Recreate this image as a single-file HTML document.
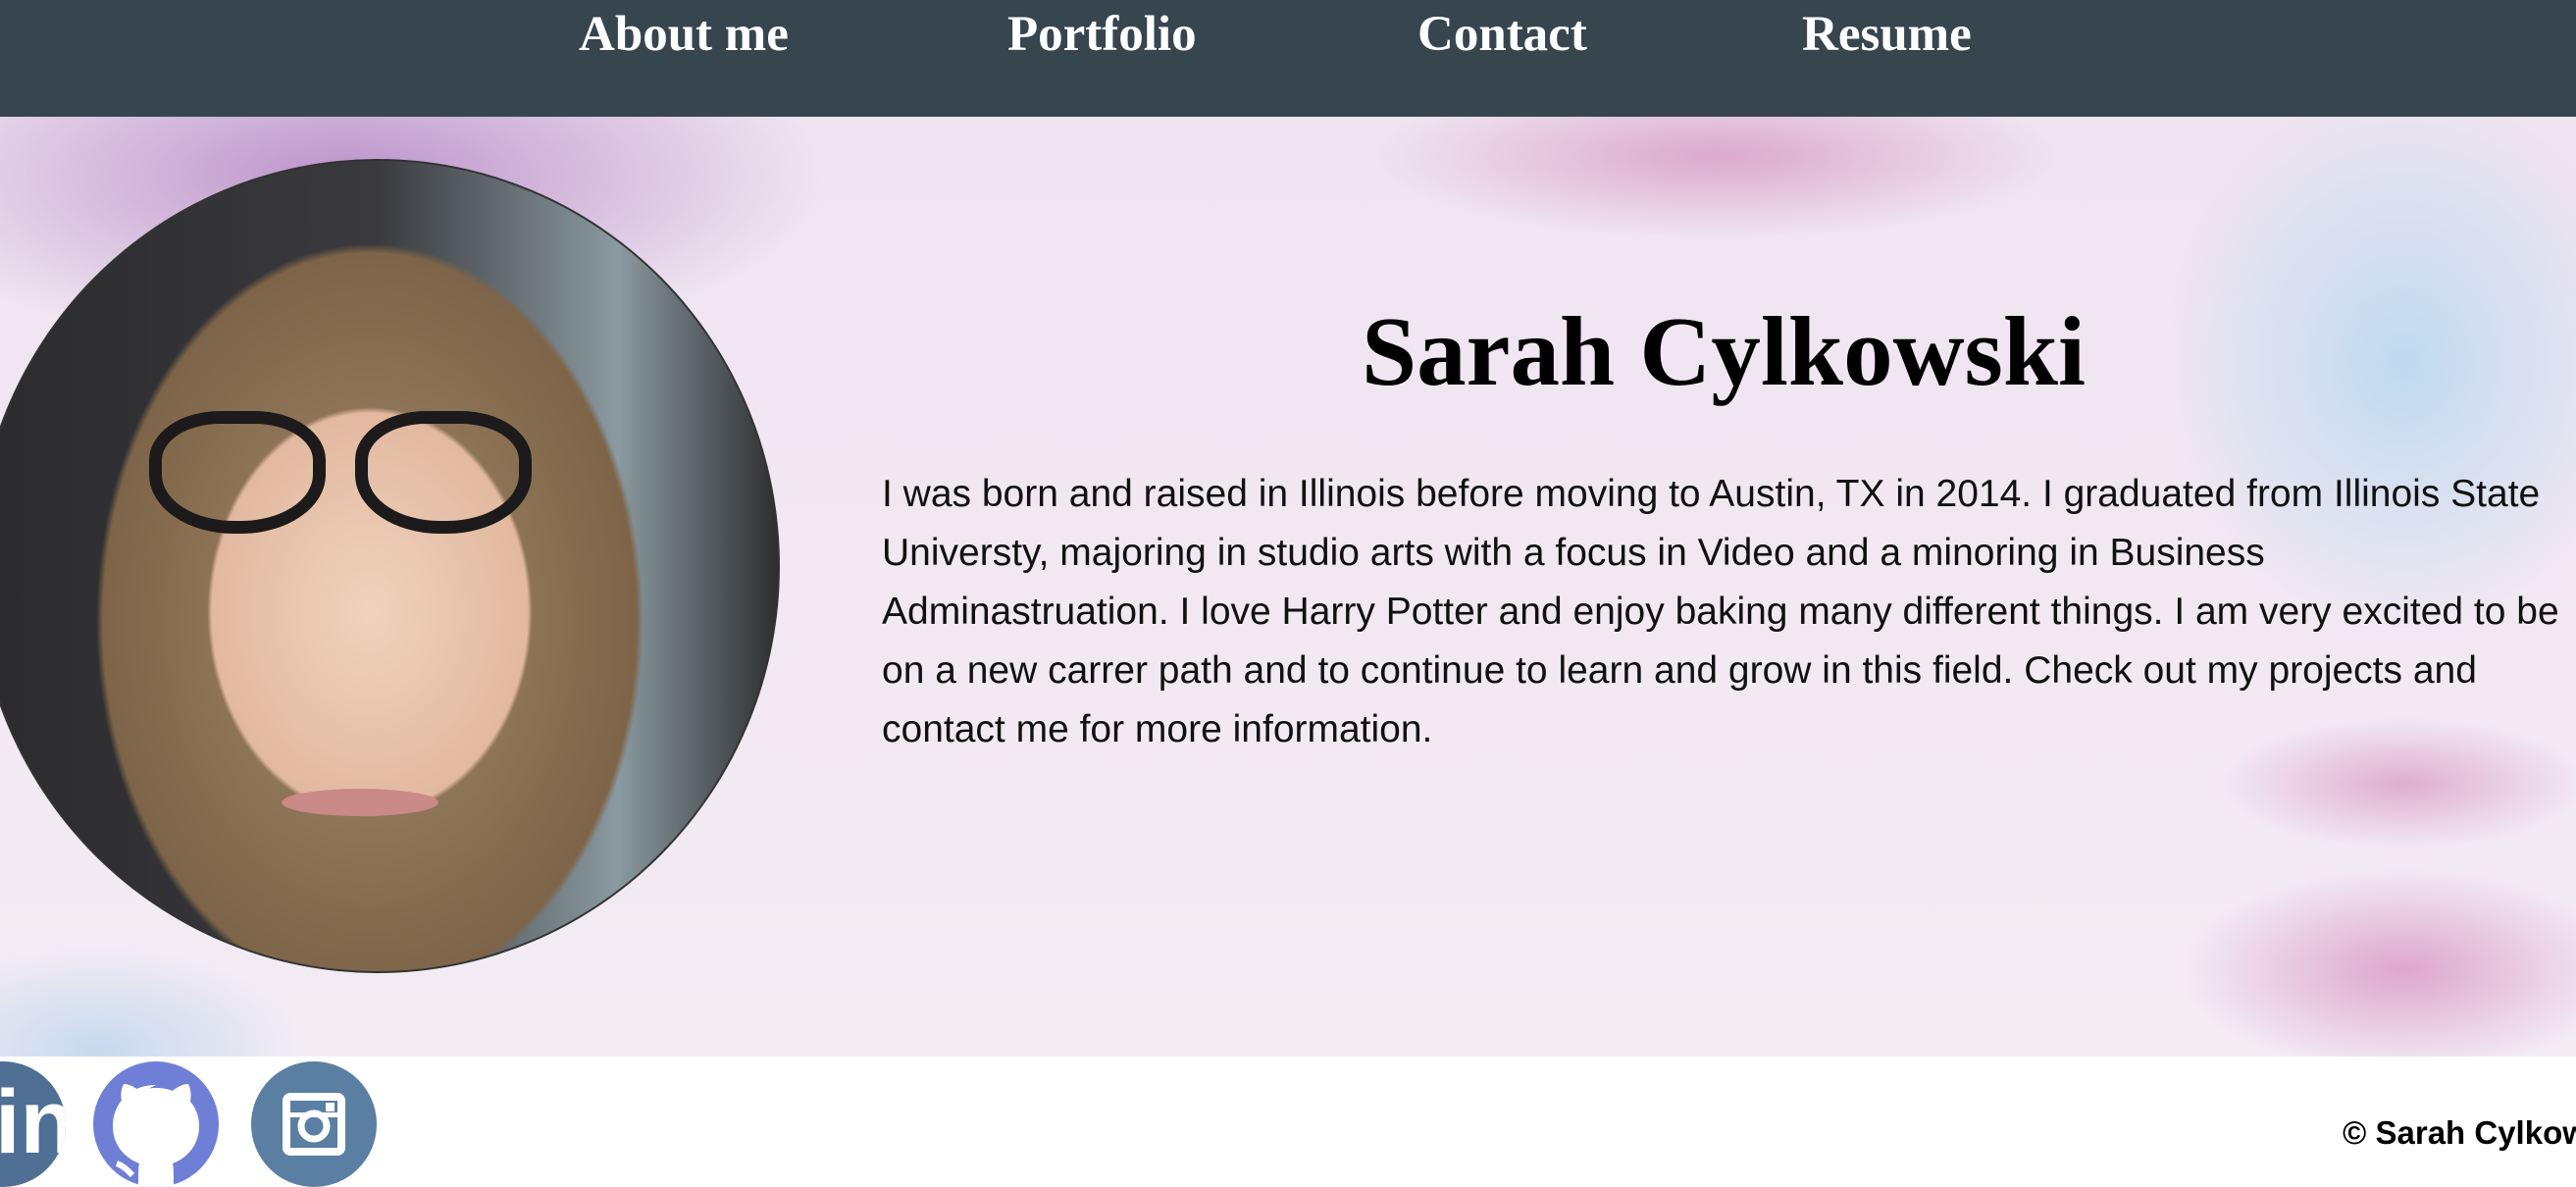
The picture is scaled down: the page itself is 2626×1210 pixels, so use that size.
<!DOCTYPE html>
<html><head><meta charset="utf-8"><style>
*{margin:0;padding:0;box-sizing:border-box}
body{width:2626px;height:1208px;overflow:hidden;background:#fff;font-family:"Liberation Sans",sans-serif;position:relative}
.nav{position:absolute;left:0;top:0;width:2626px;height:119px;background:#37454f}
.nav a{position:absolute;top:6px;color:#fff;font-family:"Liberation Serif",serif;font-size:51px;font-weight:bold;text-decoration:none}
.hero{position:absolute;left:0;top:119px;width:2626px;height:958px;overflow:hidden;
background:
radial-gradient(ellipse 700px 260px at 350px 60px,rgba(170,120,190,.75),rgba(170,120,190,0) 70%),
radial-gradient(ellipse 500px 120px at 1750px 40px,rgba(205,130,180,.6),rgba(205,130,180,0) 70%),
radial-gradient(ellipse 350px 400px at 2450px 250px,rgba(180,215,240,.8),rgba(180,215,240,0) 70%),
radial-gradient(ellipse 250px 90px at 2450px 680px,rgba(215,150,195,.7),rgba(215,150,195,0) 75%),
radial-gradient(ellipse 300px 140px at 2450px 870px,rgba(215,150,195,.8),rgba(215,150,195,0) 75%),
radial-gradient(ellipse 300px 150px at 100px 950px,rgba(170,205,235,.6),rgba(170,205,235,0) 70%),
linear-gradient(#efe4f0,#f3ecf3);}
.photo{position:absolute;left:-25px;top:162px;width:820px;height:830px;border-radius:50%;overflow:hidden;border:2px solid #333;
background:radial-gradient(ellipse 230px 290px at 400px 460px,#f0d2bd 0,#e2b9a0 70%,rgba(0,0,0,0) 72%),
radial-gradient(ellipse 340px 470px at 400px 470px,#a58a6a 0,#7e6448 80%,rgba(0,0,0,0) 82%),
linear-gradient(90deg,#2b2b2e,#3a3a3e 50%,#8a9aa0 80%,#2e2e30)}
.glass{position:absolute;top:255px;width:180px;height:125px;border:13px solid #1c1a1a;border-radius:40% 40% 48% 48%}
h1{position:absolute;left:1388px;top:300px;font-family:"Liberation Serif",serif;font-weight:bold;font-size:101px;color:#000}
p.bio{position:absolute;left:899px;top:474px;font-size:39px;line-height:60px;color:#111;white-space:nowrap}
.ic{position:absolute;top:1082px;width:128px;height:128px;border-radius:50%;overflow:hidden}
.copy{position:absolute;left:2388px;top:1136px;font-weight:bold;font-size:33px;color:#000;white-space:nowrap}
</style></head><body>
<div class="nav">
<a style="left:590px">About me</a>
<a style="left:1027px">Portfolio</a>
<a style="left:1445px">Contact</a>
<a style="left:1837px">Resume</a>
</div>
<div class="hero"></div>
<div class="photo">
<div class="glass" style="left:175px"></div>
<div class="glass" style="left:385px"></div>
<div style="position:absolute;left:310px;top:640px;width:160px;height:28px;border-radius:50%;background:#c98a88"></div>
</div>
<h1>Sarah Cylkowski</h1>
<p class="bio">I was born and raised in Illinois before moving to Austin, TX in 2014. I graduated from Illinois State<br>Universty, majoring in studio arts with a focus in Video and a minoring in Business<br>Adminastruation. I love Harry Potter and enjoy baking many different things. I am very excited to be<br>on a new carrer path and to continue to learn and grow in this field. Check out my projects and<br>contact me for more information.</p>
<div class="ic" style="left:-61px;background:#4f6f95"><span style="position:absolute;left:56px;top:10px;color:#fff;font-weight:bold;font-size:92px">in</span></div>
<div class="ic" style="left:95px;background:#6f7fd6">
<svg width="128" height="128" viewBox="0 0 128 128"><path d="M64 24c-26 0-44 18-44 42 0 18 11 32 27 38-1 4-1 8-1 28h36c0-20 0-24-1-28 16-6 27-20 27-38 0-10-3-18-9-25 1-6 1-12-2-18-6 0-11 3-16 7-5-2-11-3-17-3s-12 1-17 3c-5-4-10-7-16-7-3 6-3 12-2 18" fill="#fff"/><path d="M24 104c6 2 10 6 16 12" stroke="#fff" stroke-width="6" fill="none"/></svg></div>
<div class="ic" style="left:256px;background:#5a7fa3">
<svg width="128" height="128" viewBox="0 0 128 128"><rect x="36" y="36" width="56" height="56" rx="4" fill="none" stroke="#fff" stroke-width="8"/><circle cx="64" cy="66" r="13" fill="none" stroke="#fff" stroke-width="7"/><rect x="76" y="42" width="9" height="9" fill="#fff"/><rect x="36" y="52" width="56" height="5" fill="#fff"/></svg></div>
<div class="copy">© Sarah Cylkowski</div>
</body></html>
